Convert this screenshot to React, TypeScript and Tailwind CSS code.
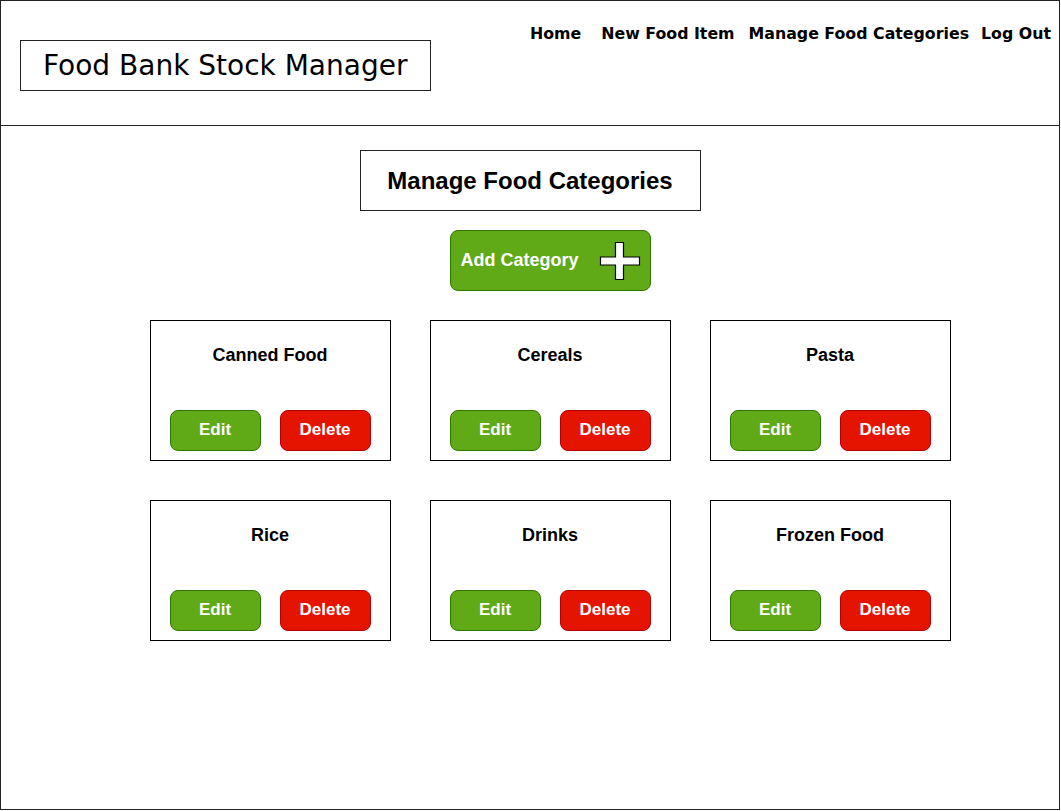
import React from "react";

const categories = ["Canned Food", "Cereals", "Pasta", "Rice", "Drinks", "Frozen Food"];

function PlusIcon() {
  return (
    <svg width="42" height="40" viewBox="0 0 42 40" className="block">
      <path
        d="M16.5 1.5 H24.5 V16 H40.5 V24 H24.5 V38.5 H16.5 V24 H1.5 V16 H16.5 Z"
        fill="#fff"
        stroke="#000"
        strokeWidth="1.2"
      />
    </svg>
  );
}

function CategoryCard({ name }: { name: string }) {
  return (
    <div className="flex h-[141px] w-[241px] flex-col border border-black bg-white">
      <div className="mt-[23px] h-[22px] text-center text-[18px] font-bold leading-[22px] text-black">{name}</div>
      <div className="ml-[19px] mt-[44px] flex gap-[19px]">
        <button className="h-[41px] w-[91px] rounded-[8px] border border-[#2d7600] bg-[#60a917] pb-[2px] text-[17px] font-bold text-white">
          Edit
        </button>
        <button className="h-[41px] w-[91px] rounded-[8px] border border-[#b20000] bg-[#e51400] pb-[2px] text-[17px] font-bold text-white">
          Delete
        </button>
      </div>
    </div>
  );
}

export default function App() {
  return (
    <div className="h-[811px] w-[1061px] bg-white font-['Liberation_Sans',Arial,sans-serif]">
      <div className="flex h-[810px] w-[1060px] flex-col border border-[#222]">
        {/* Header */}
        <div className="flex h-[125px] items-start justify-between border-b border-[#222]">
          <div className="ml-[19px] mt-[39px] flex h-[51px] w-[411px] items-center border border-[#222] pl-[22px] font-['DejaVu_Sans',sans-serif] text-[28px] text-black">
            Food Bank Stock Manager
          </div>
          <nav className="mr-[8px] mt-[21px] flex font-['DejaVu_Sans',sans-serif] text-[15.8px] font-bold text-black">
            <span className="mr-[20px]">Home</span>
            <span className="mr-[14px]">New Food Item</span>
            <span className="mr-[12px]">Manage Food Categories</span>
            <span>Log Out</span>
          </nav>
        </div>

        {/* Body */}
        <div className="flex flex-col items-center pl-[40px]">
          <div className="mr-[40px] mt-[24px] flex h-[61px] w-[341px] items-center justify-center border border-[#222] text-[24px] font-bold text-black">
            Manage Food Categories
          </div>
          <button className="mt-[19px] flex h-[61px] w-[201px] items-center justify-between rounded-[8px] border border-[#2d7600] bg-[#60a917] pl-[10px] pr-[9px] text-[18px] font-bold text-white">
            <span>Add Category</span>
            <PlusIcon />
          </button>
          <div className="mt-[29px] grid grid-cols-3 gap-x-[39px] gap-y-[39px]">
            {categories.map((c) => (
              <CategoryCard key={c} name={c} />
            ))}
          </div>
        </div>
      </div>
    </div>
  );
}
